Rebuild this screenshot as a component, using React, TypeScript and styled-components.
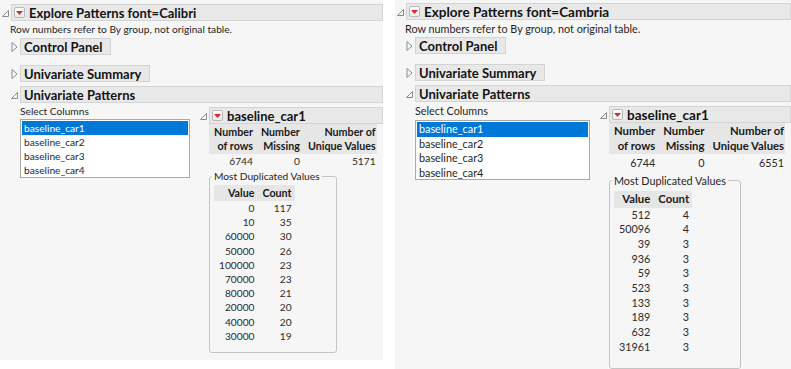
import React from "react";
import styled, { createGlobalStyle, ThemeProvider } from "styled-components";

type Dims = {
  width: number;
  height: number;
  titleTop: number;
  fs: number;
  titleFs: number;
  listW: number;
  listH: number;
  listRowH: number;
  listGap: number;
  rowH: number;
  thLH: number;
  statValH: number;
  gbW: number;
  gbH: number;
  statTop: number;
  dupTop: number;
};

const GlobalStyle = createGlobalStyle`
  html, body { margin: 0; padding: 0; background: #ffffff; }
  body {
    font-family: "Lato", "Open Sans", sans-serif;
    color: #1f1f1f;
  }
`;

const Page = styled.div`
  display: flex;
  gap: 12px;
  align-items: flex-start;
`;

const Report = styled.div<{ theme: Dims }>`
  width: ${(p) => p.theme.width}px;
  height: ${(p) => p.theme.height}px;
  background: #f6f6f6;
  padding-top: ${(p) => p.theme.titleTop}px;
  box-sizing: border-box;
  display: flex;
  flex-direction: column;
  font-size: ${(p) => p.theme.fs}px;
`;

const OutlineRow = styled.div<{ $indent: number; $mt?: number }>`
  display: flex;
  align-items: center;
  gap: 2px;
  margin-left: ${(p) => p.$indent}px;
  margin-top: ${(p) => p.$mt ?? 0}px;
`;

const Tri = styled.svg`
  flex: none;
  width: 7px;
  height: 10px;
`;

const Disclosure = ({ open }: { open: boolean }) =>
  open ? (
    <Tri viewBox="0 0 7 10">
      <path d="M6.5 2.5 L6.5 8.5 L0.5 8.5 Z" fill="#fafafa" stroke="#8a8a8a" strokeWidth="1" />
    </Tri>
  ) : (
    <Tri viewBox="0 0 7 10">
      <path d="M1 0.5 L6 5 L1 9.5 Z" fill="#fafafa" stroke="#8a8a8a" strokeWidth="1" />
    </Tri>
  );

const Bar = styled.div<{ $fill?: boolean; $title?: boolean; theme: Dims }>`
  display: flex;
  align-items: center;
  gap: 4px;
  height: 17px;
  box-sizing: border-box;
  background: #e8e8e8;
  border: 1px solid #d4d4d4;
  padding: 0 8px 0 3px;
  font-weight: 700;
  font-size: ${(p) => (p.$title ? p.theme.titleFs : 13)}px;
  white-space: nowrap;
  color: #141414;
  ${(p) => (p.$fill ? "flex: 1;" : "")}
`;

const MenuBox = styled.span`
  flex: none;
  width: 11px;
  height: 11px;
  box-sizing: border-box;
  border: 1px solid #b9b9b9;
  border-radius: 2px;
  background: linear-gradient(#ffffff, #ececec);
  display: flex;
  align-items: center;
  justify-content: center;
  margin-left: -1px;
`;

const RedMenu = () => (
  <MenuBox>
    <svg width="7" height="4" viewBox="0 0 7 4">
      <path d="M0 0 L7 0 L3.5 4 Z" fill="#e0242c" />
    </svg>
  </MenuBox>
);

const Note = styled.div`
  margin-left: 10px;
  margin-top: 2px;
  line-height: 13px;
`;

const Content = styled.div`
  display: flex;
  margin-left: 20px;
  margin-top: 2px;
  gap: 10px;
`;

const SelectCol = styled.div`
  display: flex;
  flex-direction: column;
`;

const Label = styled.div<{ theme: Dims }>`
  line-height: 13px;
  margin-bottom: ${(p) => p.theme.listGap}px;
`;

const ListBox = styled.div<{ theme: Dims }>`
  width: ${(p) => p.theme.listW}px;
  height: ${(p) => p.theme.listH}px;
  box-sizing: border-box;
  border: 1px solid #a9a9a9;
  background: #ffffff;
  padding: 1px;
`;

const ListItem = styled.div<{ $selected?: boolean; theme: Dims }>`
  height: ${(p) => p.theme.listRowH}px;
  line-height: ${(p) => p.theme.listRowH}px;
  padding-left: 2px;
  background: ${(p) => (p.$selected ? "#0078d7" : "transparent")};
  color: ${(p) => (p.$selected ? "#ffffff" : "#1f1f1f")};
`;

const Detail = styled.div<{ theme: Dims }>`
  flex: 1;
  display: flex;
  flex-direction: column;
  margin-top: ${(p) => p.theme.statTop}px;
`;

const DetailBody = styled.div`
  margin-left: 9px;
  display: flex;
  flex-direction: column;
  align-items: flex-start;
`;

const Table = styled.table`
  border-collapse: collapse;
  font-size: inherit;
`;

const Th = styled.th<{ $pad?: number; theme: Dims }>`
  background: #e6e6e6;
  font-weight: 700;
  font-size: 1.05em;
  text-align: right;
  vertical-align: bottom;
  line-height: ${(p) => p.theme.thLH}px;
  padding: 1px ${(p) => p.$pad ?? 3}px 1px 5px;
  white-space: nowrap;
  color: #1a1a1a;
`;

const Td = styled.td<{ $pad?: number; theme: Dims }>`
  text-align: right;
  line-height: ${(p) => p.theme.rowH}px;
  padding: 0 ${(p) => p.$pad ?? 3}px 0 5px;
  font-weight: 400;
  color: #2a2a2a;
`;

const StatTd = styled(Td)<{ theme: Dims }>`
  height: ${(p) => p.theme.statValH}px;
  line-height: ${(p) => p.theme.statValH}px;
`;

const GroupBox = styled.fieldset<{ theme: Dims }>`
  margin: 2px 0 0 0;
  width: ${(p) => p.theme.gbW}px;
  height: ${(p) => p.theme.gbH}px;
  box-sizing: border-box;
  border: 1px solid #c4c4c4;
  border-radius: 3px;
  padding: ${(p) => p.theme.dupTop}px 4px 0 4px;
  min-inline-size: 0;
`;

const Legend = styled.legend`
  padding: 0 2px;
  margin-left: -2px;
`;

type Data = {
  font: string;
  rows: string;
  missing: string;
  unique: string;
  dup: [string, string][];
};

const leftDims: Dims = {
  width: 383,
  height: 360,
  titleTop: 4,
  fs: 10.2,
  titleFs: 13,
  listW: 170,
  listH: 59,
  listRowH: 14,
  listGap: 1,
  rowH: 14.2,
  thLH: 14,
  statValH: 14,
  gbW: 128,
  gbH: 183,
  statTop: 2,
  dupTop: 3,
};

const rightDims: Dims = {
  width: 396,
  height: 369,
  titleTop: 3,
  fs: 10.8,
  titleFs: 13.5,
  listW: 175,
  listH: 60,
  listRowH: 14.5,
  listGap: 3,
  rowH: 14.67,
  thLH: 14.5,
  statValH: 18,
  gbW: 132,
  gbH: 195,
  statTop: 2,
  dupTop: 4,
};

const ExplorePatterns = ({ d }: { d: Data }) => (
  <Report>
    <OutlineRow $indent={2}>
      <Disclosure open />
      <Bar $fill $title>
        <RedMenu />
        Explore Patterns font={d.font}
      </Bar>
    </OutlineRow>
    <Note>Row numbers refer to By group, not original table.</Note>
    <OutlineRow $indent={11} $mt={2}>
      <Disclosure open={false} />
      <Bar>Control Panel</Bar>
    </OutlineRow>
    <OutlineRow $indent={11} $mt={10}>
      <Disclosure open={false} />
      <Bar>Univariate Summary</Bar>
    </OutlineRow>
    <OutlineRow $indent={11} $mt={4}>
      <Disclosure open />
      <Bar $fill>Univariate Patterns</Bar>
    </OutlineRow>
    <Content>
      <SelectCol>
        <Label>Select Columns</Label>
        <ListBox>
          <ListItem $selected>baseline_car1</ListItem>
          <ListItem>baseline_car2</ListItem>
          <ListItem>baseline_car3</ListItem>
          <ListItem>baseline_car4</ListItem>
        </ListBox>
      </SelectCol>
      <Detail>
        <OutlineRow $indent={0}>
          <Disclosure open />
          <Bar $fill $title>
            <RedMenu />
            baseline_car1
          </Bar>
        </OutlineRow>
        <DetailBody>
          <Table>
            <thead>
              <tr>
                <Th>Number<br />of rows</Th>
                <Th>Number<br />Missing</Th>
                <Th $pad={1}>Number of<br />Unique Values</Th>
              </tr>
            </thead>
            <tbody>
              <tr>
                <StatTd>{d.rows}</StatTd>
                <StatTd>{d.missing}</StatTd>
                <StatTd $pad={1}>{d.unique}</StatTd>
              </tr>
            </tbody>
          </Table>
          <GroupBox>
            <Legend>Most Duplicated Values</Legend>
            <Table>
              <thead>
                <tr>
                  <Th>Value</Th>
                  <Th>Count</Th>
                </tr>
              </thead>
              <tbody>
                {d.dup.map(([v, c], i) => (
                  <tr key={i}>
                    <Td>{v}</Td>
                    <Td>{c}</Td>
                  </tr>
                ))}
              </tbody>
            </Table>
          </GroupBox>
        </DetailBody>
      </Detail>
    </Content>
  </Report>
);

const left: Data = {
  font: "Calibri",
  rows: "6744",
  missing: "0",
  unique: "5171",
  dup: [
    ["0", "117"],
    ["10", "35"],
    ["60000", "30"],
    ["50000", "26"],
    ["100000", "23"],
    ["70000", "23"],
    ["80000", "21"],
    ["20000", "20"],
    ["40000", "20"],
    ["30000", "19"],
  ],
};

const right: Data = {
  font: "Cambria",
  rows: "6744",
  missing: "0",
  unique: "6551",
  dup: [
    ["512", "4"],
    ["50096", "4"],
    ["39", "3"],
    ["936", "3"],
    ["59", "3"],
    ["523", "3"],
    ["133", "3"],
    ["189", "3"],
    ["632", "3"],
    ["31961", "3"],
  ],
};

export default function App() {
  return (
    <>
      <GlobalStyle />
      <Page>
        <ThemeProvider theme={leftDims}>
          <ExplorePatterns d={left} />
        </ThemeProvider>
        <ThemeProvider theme={rightDims}>
          <ExplorePatterns d={right} />
        </ThemeProvider>
      </Page>
    </>
  );
}
